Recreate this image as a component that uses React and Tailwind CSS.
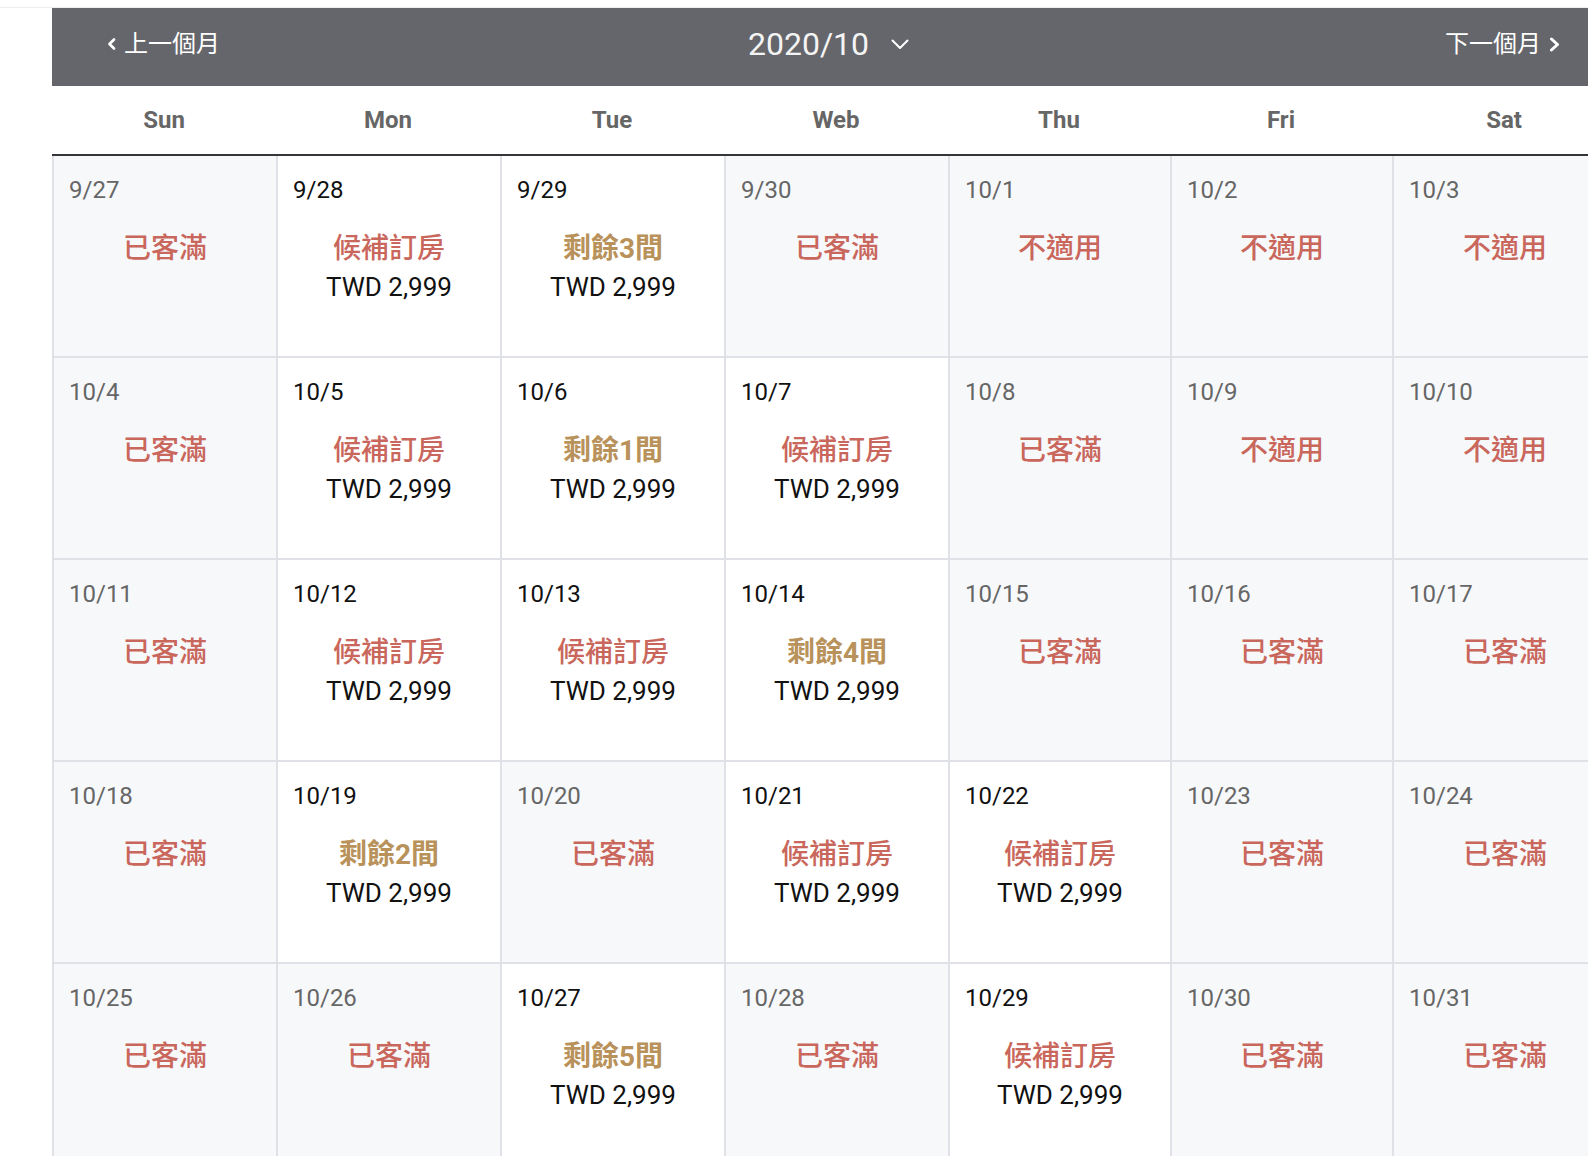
import React from "react";

const F = { fontFamily: 'Roboto, "Noto Sans CJK TC", sans-serif' };

const rows = [
  [["9/27", "full"], ["9/28", "wait"], ["9/29", "left", 3], ["9/30", "full"], ["10/1", "na"], ["10/2", "na"], ["10/3", "na"]],
  [["10/4", "full"], ["10/5", "wait"], ["10/6", "left", 1], ["10/7", "wait"], ["10/8", "full"], ["10/9", "na"], ["10/10", "na"]],
  [["10/11", "full"], ["10/12", "wait"], ["10/13", "wait"], ["10/14", "left", 4], ["10/15", "full"], ["10/16", "full"], ["10/17", "full"]],
  [["10/18", "full"], ["10/19", "left", 2], ["10/20", "full"], ["10/21", "wait"], ["10/22", "wait"], ["10/23", "full"], ["10/24", "full"]],
  [["10/25", "full"], ["10/26", "full"], ["10/27", "left", 5], ["10/28", "full"], ["10/29", "wait"], ["10/30", "full"], ["10/31", "full"]],
];

const days = ["Sun", "Mon", "Tue", "Web", "Thu", "Fri", "Sat"];
const cols = "grid grid-cols-[224px_224px_224px_224px_222px_222px_224px]";

function Cell({ d }) {
  const [date, kind, n] = d;
  const open = kind === "wait" || kind === "left";
  return (
    <div
      className={`h-[202px] border-r-2 border-b-2 border-[#dfe1e6] flex flex-col ${
        open ? "bg-white" : "bg-[#f7f8fa]"
      }`}
    >
      <div
        className={`pl-[15px] pt-[19px] h-[49px] text-[24px] leading-[30px] ${
          open ? "text-[#111]" : "text-[#666]"
        }`}
      >
        {date}
      </div>
      <div className="mt-[25px] flex flex-col items-center">
        {kind === "full" && (
          <div className="text-[28px] leading-[38px] font-medium text-[#c9675c]">已客滿</div>
        )}
        {kind === "na" && (
          <div className="text-[28px] leading-[38px] font-medium text-[#c9675c]">不適用</div>
        )}
        {kind === "wait" && (
          <div className="text-[28px] leading-[38px] font-medium text-[#c9675c]">候補訂房</div>
        )}
        {kind === "left" && (
          <div className="text-[28px] leading-[38px] font-bold text-[#b8925a]">剩餘{n}間</div>
        )}
        {open && <div className="text-[26px] leading-[38px] text-[#111]">TWD 2,999</div>}
      </div>
    </div>
  );
}

export default function App() {
  return (
    <div className="w-full h-[1156px] overflow-hidden bg-white" style={F}>
      <div className="h-[8px] border-b border-[#eeeeee]" />
      <div className="ml-[52px] w-[1566px]">
        <div className="h-[78px] bg-[#65666b] flex items-center pl-[55px] pr-[58px] pb-[6px] text-white">
          <div className="flex items-center gap-[8px] text-[24px]">
            <svg width="9" height="12" viewBox="0 0 9 12">
              <polyline points="7,1.5 2.5,6 7,10.5" fill="none" stroke="white" strokeWidth="2.6" strokeLinecap="round" strokeLinejoin="round" />
            </svg>
            <span>上一個月</span>
          </div>
          <div className="flex-1 flex items-center justify-center gap-[22px] pr-[8px]">
            <span className="text-[32px] text-[#f4f4f4]">2020/10</span>
            <svg width="18" height="11" viewBox="0 0 18 11">
              <polyline points="1.5,1.5 9,9 16.5,1.5" fill="none" stroke="white" strokeWidth="2" strokeLinecap="round" strokeLinejoin="round" />
            </svg>
          </div>
          <div className="flex items-center gap-[8px] text-[24px]">
            <span>下一個月</span>
            <svg width="11" height="15" viewBox="0 0 11 15">
              <polyline points="2.5,2 8.5,7.5 2.5,13" fill="none" stroke="white" strokeWidth="3" strokeLinecap="round" strokeLinejoin="round" />
            </svg>
          </div>
        </div>
        <div className={`${cols} h-[70px] border-b-2 border-[#35363a]`}>
          {days.map((d) => (
            <div key={d} className="flex items-center justify-center text-[24px] font-bold text-[#666]">
              {d}
            </div>
          ))}
        </div>
        <div className={`${cols} border-l-2 border-[#dfe1e6]`}>
          {rows.flat().map((d) => (
            <Cell key={d[0]} d={d} />
          ))}
        </div>
      </div>
    </div>
  );
}
